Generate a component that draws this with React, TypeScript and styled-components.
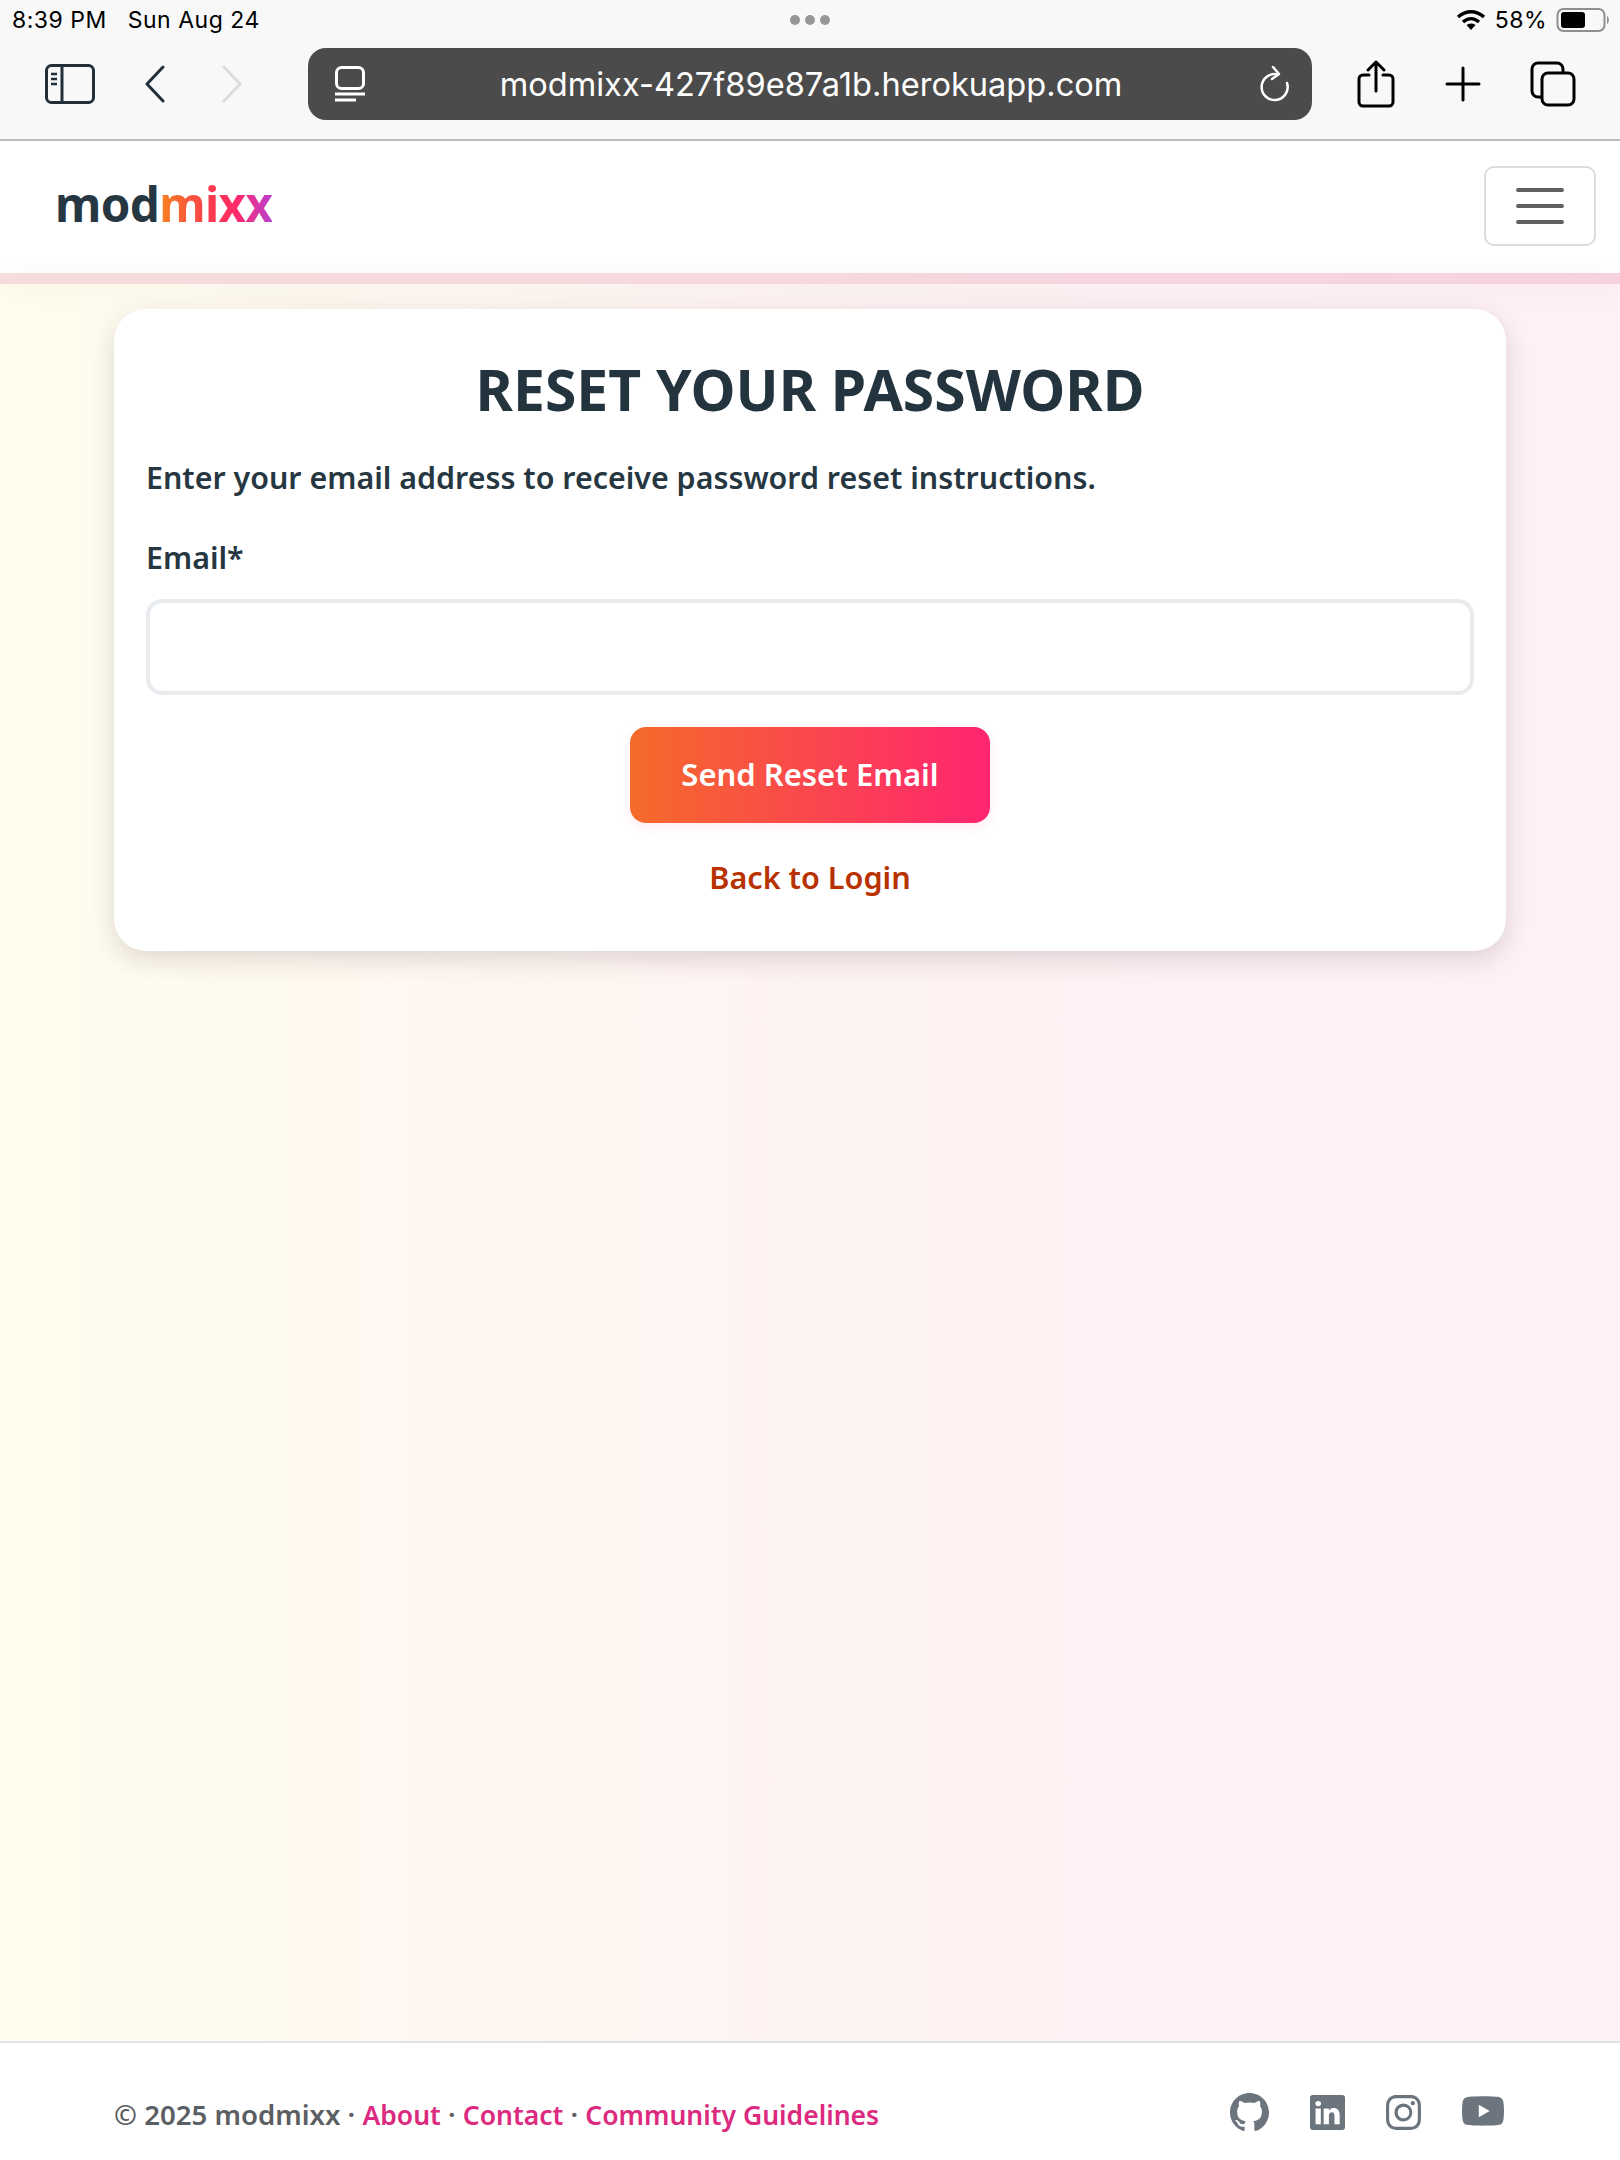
import React from "react";
import styled, { createGlobalStyle } from "styled-components";
import { BsGithub, BsLinkedin, BsInstagram, BsYoutube } from "react-icons/bs";

const Global = createGlobalStyle`
  html, body { margin: 0; padding: 0; }
  body { font-family: "Noto Sans", "Open Sans", sans-serif; color: #212f3b; background: #fff; }
  * { box-sizing: border-box; }
`;

const Page = styled.div`
  width: 1620px;
  height: 2160px;
  display: flex;
  flex-direction: column;
  overflow: hidden;
`;

const Chrome = styled.header`
  height: 141px;
  flex: none;
  background: #f8f8f8;
  border-bottom: 2px solid #bcbcbc;
  display: flex;
  flex-direction: column;
`;

const StatusBar = styled.div`
  height: 40px;
  padding: 0 10px 0 12px;
  display: grid;
  grid-template-columns: 1fr auto 1fr;
  align-items: center;
  font-family: "Inter", "Liberation Sans", sans-serif;
  font-size: 23px;
  letter-spacing: 0.5px;
  color: #000;
`;

const StatusLeft = styled.div`
  display: flex;
  gap: 21px;
`;

const StatusDots = styled.div`
  display: flex;
  gap: 5px;
  margin-left: -2px;
`;

const Dot = styled.span`
  width: 10px;
  height: 10px;
  border-radius: 50%;
  background: #979797;
`;

const StatusRight = styled.div`
  display: flex;
  justify-content: flex-end;
  align-items: center;
  gap: 9px;
`;

const Toolbar = styled.div`
  height: 72px;
  margin-top: 8px;
  padding-left: 45px;
  display: flex;
  align-items: center;
`;

const UrlBar = styled.div`
  width: 1004px;
  height: 72px;
  margin-left: 65px;
  margin-right: 45px;
  padding: 0 22px 0 27px;
  border-radius: 18px;
  background: #4b4b4b;
  color: #fff;
  display: flex;
  align-items: center;
  justify-content: space-between;
`;

const UrlText = styled.span`
  font-family: "Inter", "Liberation Sans", sans-serif;
  font-size: 32.6px;
  font-weight: 400;
  margin-left: -3px;
`;

const Icon = styled.svg<{ $ml?: number }>`
  flex: none;
  display: block;
  margin-left: ${(p) => p.$ml ?? 0}px;
  fill: none;
  stroke: currentColor;
`;

const ToolIcons = styled.div`
  display: flex;
  align-items: center;
  color: #000;
`;

const Nav = styled.nav`
  position: relative;
  z-index: 2;
  height: 132px;
  flex: none;
  background: #fff;
  padding: 0 24px 0 55px;
  display: flex;
  align-items: center;
  justify-content: space-between;
`;

const Logo = styled.div`
  font-size: 47.5px;
  font-weight: 700;
  letter-spacing: -0.6px;
  line-height: 1;
  color: #263742;
  margin-top: -6px;
`;

const LogoAccent = styled.span`
  background: linear-gradient(90deg, #f6831f 0%, #fb3b4e 45%, #ff2a6d 70%, #b83fd0 100%);
  -webkit-background-clip: text;
  background-clip: text;
  color: transparent;
`;

const Burger = styled.button`
  width: 112px;
  height: 80px;
  margin-top: -2px;
  padding: 0;
  background: #fff;
  border: 2px solid #dcdcdc;
  border-radius: 10px;
  display: flex;
  flex-direction: column;
  align-items: center;
  justify-content: center;
  gap: 12px;
`;

const BurgerLine = styled.span`
  width: 48px;
  height: 4px;
  border-radius: 2px;
  background: #5c6063;
`;

const Band = styled.div`
  position: relative;
  z-index: 2;
  height: 11px;
  flex: none;
  background: linear-gradient(90deg, #f6dcdc 0%, #f6d8de 50%, #f8d1e0 100%);
  box-shadow: 0 4px 30px rgba(40, 30, 30, 0.055);
`;

const Main = styled.main`
  flex: 1;
  padding: 25px 114px 0;
  background: linear-gradient(90deg, #fffdee 0%, #fef3f3 50%, #fef1f6 100%);
`;

const Card = styled.section`
  height: 642px;
  padding: 47px 32px 0;
  background: #fff;
  border-radius: 32px;
  box-shadow: 0 8px 26px rgba(60, 35, 45, 0.17);
  display: flex;
  flex-direction: column;
`;

const Title = styled.h1`
  margin: 0;
  text-align: center;
  font-size: 57px;
  line-height: 66px;
  font-weight: 700;
  letter-spacing: 0;
  color: #23343f;
`;

const Lead = styled.p`
  margin: 34px 0 0;
  font-size: 30.4px;
  line-height: 44px;
  font-weight: 600;
  color: #263742;
`;

const Label = styled.label`
  display: block;
  margin-top: 36px;
  font-size: 30.4px;
  line-height: 44px;
  font-weight: 600;
  color: #263742;
`;

const Input = styled.input`
  display: block;
  width: 100%;
  height: 96px;
  margin-top: 19px;
  background: #fff;
  border: 4px solid #e9ecef;
  border-radius: 16px;
`;

const Send = styled.button`
  align-self: center;
  width: 360px;
  height: 96px;
  margin-top: 32px;
  padding: 0 0 3px;
  border: 0;
  border-radius: 16px;
  background: linear-gradient(90deg, #f56b2a 0%, #ff2470 100%);
  box-shadow: 0 4px 12px rgba(255, 60, 110, 0.1);
  color: #fff;
  font-family: inherit;
  font-size: 31px;
  font-weight: 600;
`;

const BackLink = styled.a`
  align-self: center;
  margin-top: 32px;
  font-size: 30.6px;
  line-height: 44px;
  font-weight: 600;
  color: #b83200;
`;

const Footer = styled.footer`
  height: 119px;
  flex: none;
  padding: 0 116px 0 114px;
  background: #fff;
  border-top: 2px solid #dfe3e7;
  display: flex;
  align-items: center;
  justify-content: space-between;
`;

const FooterText = styled.div`
  margin-top: 24px;
  font-size: 27.6px;
  font-weight: 600;
  color: #5b5e62;
`;

const FooterLink = styled.a`
  font-size: 26.5px;
  color: #dc2a80;
`;

const Socials = styled.div`
  margin-top: 21px;
  display: flex;
  align-items: center;
  gap: 41px;
  color: #6c757d;
`;

export default function App() {
  return (
    <Page>
      <Global />
      <Chrome>
        <StatusBar>
          <StatusLeft>
            <span>8:39 PM</span>
            <span>Sun Aug 24</span>
          </StatusLeft>
          <StatusDots>
            <Dot />
            <Dot />
            <Dot />
          </StatusDots>
          <StatusRight>
            <svg width="30" height="22" viewBox="0 0 30 22" fill="none" stroke="#000" strokeWidth="3.4">
              <path d="M2 8c8-7 18-7 26 0" />
              <path d="M7 13c5-4.500 11-4.500 16 0" />
              <path d="M15 21l-4.500-5c2.800-2 6.200-2 9 0z" fill="#000" stroke="none" />
            </svg>
            <span>58%</span>
            <svg width="54" height="26" viewBox="0 0 54 26">
              <rect x="1.500" y="2" width="47" height="22" rx="6" fill="none" stroke="#8f8f8f" strokeWidth="2" />
              <rect x="5" y="5" width="24" height="16" rx="3" fill="#000" />
              <path d="M51 9c2.500 1 2.500 7 0 8z" fill="#8f8f8f" />
            </svg>
          </StatusRight>
        </StatusBar>
        <Toolbar>
          <Icon width="50" height="40" viewBox="0 0 50 40" strokeWidth="3">
            <rect x="1.500" y="1.500" width="47" height="37" rx="5" />
            <path d="M17 2v36" />
            <path d="M6 10h6M6 15h6M6 20h6" strokeWidth="2.500" />
          </Icon>
          <Icon $ml={49} width="22" height="38" viewBox="0 0 22 38" strokeWidth="3" strokeLinecap="round" strokeLinejoin="round">
            <path d="M19 2L3 19l16 17" />
          </Icon>
          <Icon $ml={55} width="22" height="38" viewBox="0 0 22 38" strokeWidth="3" strokeLinecap="round" strokeLinejoin="round" style={{ color: "#dcdcdc" }}>
            <path d="M3 2l16 17L3 36" />
          </Icon>
          <UrlBar>
            <Icon width="30" height="36" viewBox="0 0 30 36" strokeWidth="3">
              <rect x="1.500" y="1.500" width="27" height="21" rx="5" />
              <path d="M0 28h30M0 34h21" />
            </Icon>
            <UrlText>modmixx-427f89e87a1b.herokuapp.com</UrlText>
            <Icon width="30" height="36" viewBox="0 0 30 36" strokeWidth="2.500" strokeLinecap="round" strokeLinejoin="round">
              <path d="M18 8.500A13 13 0 1 0 27 17" />
              <path d="M13 1l6 7-7 5" />
            </Icon>
          </UrlBar>
          <ToolIcons>
            <Icon width="38" height="48" viewBox="0 0 38 48" strokeWidth="3" strokeLinecap="round" strokeLinejoin="round">
              <path d="M12 15H6a4 4 0 0 0-4 4v23a4 4 0 0 0 4 4h26a4 4 0 0 0 4-4V19a4 4 0 0 0-4-4h-6" />
              <path d="M19 31V2M11 10l8-8 8 8" />
            </Icon>
            <Icon $ml={50} width="36" height="36" viewBox="0 0 36 36" strokeWidth="3" strokeLinecap="round">
              <path d="M18 2v32M2 18h32" />
            </Icon>
            <Icon $ml={49} width="46" height="46" viewBox="0 0 46 46" strokeWidth="3">
              <path d="M11 36H8a6 6 0 0 1-6-6V8a6 6 0 0 1 6-6h19a6 6 0 0 1 6 6v4" />
              <rect x="12" y="12" width="32" height="32" rx="6" />
            </Icon>
          </ToolIcons>
        </Toolbar>
      </Chrome>
      <Nav>
        <Logo>
          mod<LogoAccent>mixx</LogoAccent>
        </Logo>
        <Burger aria-label="Menu">
          <BurgerLine />
          <BurgerLine />
          <BurgerLine />
        </Burger>
      </Nav>
      <Band />
      <Main>
        <Card>
          <Title>RESET YOUR PASSWORD</Title>
          <Lead>Enter your email address to receive password reset instructions.</Lead>
          <Label>Email*</Label>
          <Input type="email" />
          <Send>Send Reset Email</Send>
          <BackLink>Back to Login</BackLink>
        </Card>
      </Main>
      <Footer>
        <FooterText>
          © 2025 modmixx · <FooterLink>About</FooterLink> · <FooterLink>Contact</FooterLink> ·{" "}
          <FooterLink>Community Guidelines</FooterLink>
        </FooterText>
        <Socials>
          <BsGithub size={39} />
          <BsLinkedin size={35} />
          <BsInstagram size={35} />
          <BsYoutube size={42} />
        </Socials>
      </Footer>
    </Page>
  );
}
